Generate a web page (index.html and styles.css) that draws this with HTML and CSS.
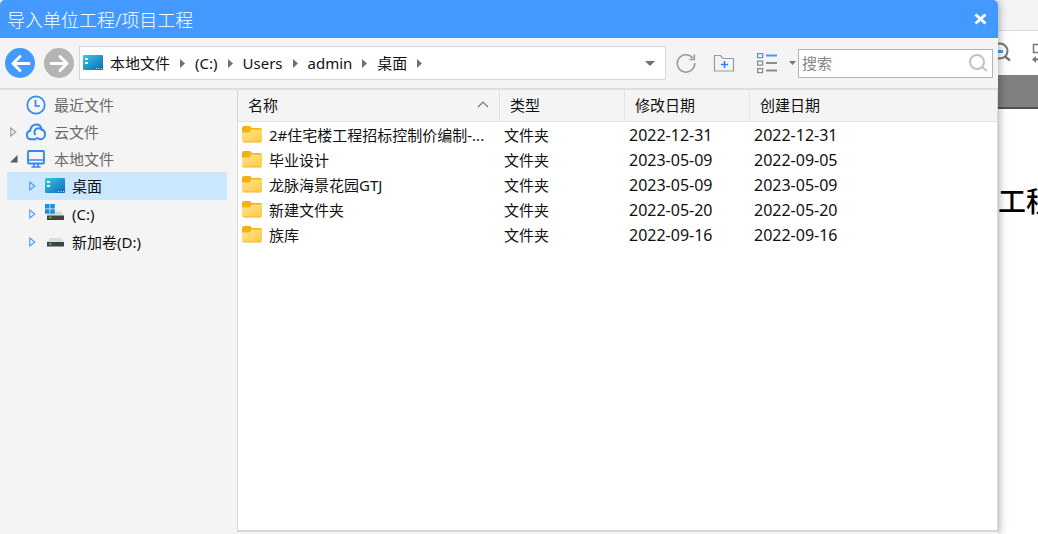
FILE: index.html
```
<!DOCTYPE html>
<html lang="zh-CN">
<head>
<meta charset="utf-8">
<meta name="viewport" content="width=device-width, initial-scale=1">
<title>导入单位工程/项目工程</title>
<link rel="stylesheet" href="styles.css">
</head>
<body>
<svg class="defs" aria-hidden="true">
  <defs>
    <linearGradient id="desk-fill" x1="0" y1="0" x2="1" y2="1"><stop offset="0" stop-color="#35cbe0"/><stop offset="1" stop-color="#0f67b8"/></linearGradient>
    <linearGradient id="folder-fill" x1="0" y1="0" x2="1" y2="1"><stop offset="0" stop-color="#ffe49a"/><stop offset="1" stop-color="#ffc93c"/></linearGradient>
    <symbol id="desk" viewBox="0 0 20 16"><rect width="20" height="15" rx="1" fill="url(#desk-fill)"/><path d="M2 3h3v2H2zM2 7h3v2H2z" fill="#e8ffff"/><path d="M13 13.500h1M15.500 13.500h1M18 13.500h1" stroke="#bfe4ff"/></symbol>
    <symbol id="folder" viewBox="0 0 20 17"><path d="M0 2Q0 0 2 0h6l2 2h8q2 0 2 2v4H0z" fill="#f5b20f"/><path d="M0 6.500h7.500L9.500 3.500H20v11q0 1.500-1.500 1.500h-17Q0 16 0 14.500z" fill="url(#folder-fill)"/><path d="M1 16h18" stroke="#e9b52e"/></symbol>
    <symbol id="twist" viewBox="0 0 7 10"><path d="M.8 1v8l5-4z" fill="none" stroke="currentColor" stroke-width="1.100"/></symbol>
    <symbol id="crumb" viewBox="0 0 5 9"><path d="M0 0v9l5-4.500z" fill="#70707c"/></symbol>
  </defs>
</svg>
<div class="desktop">
  <main class="dialog">
    <header class="titlebar">
      <h1 class="title">导入单位工程/项目工程</h1>
      <button class="close" type="button" aria-label="关闭"><svg width="13" height="12" viewBox="0 0 13 12"><path d="M1.500 1.500l10 9M11.500 1.500l-10 9" stroke="#fff" stroke-width="3"/></svg></button>
    </header>
    <div class="toolbar">
      <button class="nav back" type="button" aria-label="后退"><svg width="30" height="30" viewBox="0 0 30 30"><path d="M24 15.500H8M15 8.500l-7 7 7 7" fill="none" stroke="#fff" stroke-width="3" stroke-linecap="round" stroke-linejoin="round"/></svg></button>
      <button class="nav forward" type="button" aria-label="前进"><svg width="30" height="30" viewBox="0 0 30 30"><path d="M7 15.500h16M16 8.500l7 7-7 7" fill="none" stroke="#fff" stroke-width="3" stroke-linecap="round" stroke-linejoin="round"/></svg></button>
      <nav class="address" aria-label="路径">
        <svg class="desk-icon" width="20" height="16"><use href="#desk"/></svg>
        <a href="#local">本地文件</a><svg class="sep" width="5" height="9"><use href="#crumb"/></svg>
        <a href="#c">(C:)</a><svg class="sep" width="5" height="9"><use href="#crumb"/></svg>
        <a href="#users">Users</a><svg class="sep" width="5" height="9"><use href="#crumb"/></svg>
        <a href="#admin">admin</a><svg class="sep" width="5" height="9"><use href="#crumb"/></svg>
        <a href="#desktop">桌面</a><svg class="sep" width="5" height="9"><use href="#crumb"/></svg>
        <button class="drop" type="button" aria-label="历史路径"><svg width="10" height="5" viewBox="0 0 10 5"><path d="M0 0h10L5 5z" fill="#6a6e80"/></svg></button>
      </nav>
      <button class="tool refresh" type="button" aria-label="刷新"><svg width="22" height="20" viewBox="0 0 22 20"><path d="M17.800 5A8.700 8.700 0 1 0 19.700 10" fill="none" stroke="#999" stroke-width="1.600"/><path d="M19.300 1.500v5h-5" fill="none" stroke="#999" stroke-width="1.600"/></svg></button>
      <button class="tool new-folder" type="button" aria-label="新建文件夹"><svg width="22" height="18" viewBox="0 0 22 18"><path d="M1.500 1.500h6l2.500 3h10.500v12.500h-19z" fill="none" stroke="#9b9b9b" stroke-width="1.200"/><path d="M8 10.500h7M11.500 7v7" stroke="#2484ee" stroke-width="1.500"/></svg></button>
      <button class="tool view" type="button" aria-label="视图"><svg width="20" height="21" viewBox="0 0 20 21"><path d="M.6.600h5v4h-5z" fill="none" stroke="#4598ff" stroke-width="1.300"/><path d="M9 2.500h11" stroke="#4598ff" stroke-width="2"/><path d="M.6 8.100h5v4h-5zM.6 15.600h5v4h-5z" fill="none" stroke="#8c8c8c" stroke-width="1.300"/><path d="M9 10h11M9 17.500h11" stroke="#8c8c8c" stroke-width="2"/></svg><svg width="7" height="4" viewBox="0 0 7 4"><path d="M0 0h7L3.500 4z" fill="#777"/></svg></button>
      <form class="search">
        <input type="search" aria-label="搜索" placeholder="搜索">
        <button type="button" aria-label="开始搜索"><svg width="20" height="18" viewBox="0 0 20 18"><circle cx="9" cy="8" r="7" fill="none" stroke="#c2c2c2" stroke-width="2"/><path d="M14 13l5 4" stroke="#c2c2c2" stroke-width="2"/></svg></button>
      </form>
    </div>
    <div class="content">
      <nav class="tree" aria-label="文件位置">
        <a class="node" href="#recent"><span class="twist"></span><svg class="ico" width="20" height="20" viewBox="0 0 20 20"><circle cx="10" cy="10" r="8.700" fill="none" stroke="#3287ed" stroke-width="1.700"/><path d="M9.500 5v6H14" fill="none" stroke="#3287ed" stroke-width="1.700"/></svg>最近文件</a>
        <a class="node" href="#cloud"><span class="twist"><svg width="7" height="10"><use href="#twist"/></svg></span><svg class="ico" width="20" height="20" viewBox="0 0 20 20"><path d="M10.500 17.300H5a4.300 4.300 0 0 1-.7-8.500C4.300 5 7 2.500 10.300 2.500c2.700 0 4.800 1.600 5.300 5A4.900 4.900 0 0 1 19 12.300c0 3-2 5-4.500 5q-2.500 0-4-2" fill="none" stroke="#3287ed" stroke-width="1.900" stroke-linejoin="round"/><path d="M9.500 13a4 4 0 0 1 6-5.500" fill="none" stroke="#3287ed" stroke-width="1.900"/></svg>云文件</a>
        <a class="node" href="#local"><span class="twist"><svg width="8" height="8" viewBox="0 0 8 8"><path d="M7.500 0v7.500H0z" fill="#555b60"/></svg></span><svg class="ico" width="20" height="20" viewBox="0 0 20 20"><rect x="2" y="2" width="16" height="12.500" rx="1" fill="none" stroke="#3287ed" stroke-width="1.800"/><path d="M2 11h16M8 14v3.500M12 14v3.500M5.500 18h9" fill="none" stroke="#3287ed" stroke-width="1.600"/></svg>本地文件</a>
        <a class="node child selected" href="#desktop"><span class="twist"><svg width="7" height="10"><use href="#twist"/></svg></span><svg class="ico" width="20" height="16"><use href="#desk"/></svg>桌面</a>
        <a class="node child" href="#c"><span class="twist"><svg width="7" height="10"><use href="#twist"/></svg></span><svg class="ico" width="20" height="20" viewBox="0 0 20 20"><path d="M5 7.500h11l3 4H2z" fill="#d6d9da"/><path d="M2 11.500h17V16H2z" fill="#414343"/><path d="M4 13.500h2.500" stroke="#45d24b" stroke-width="1.500"/><path d="M0 0h4.500v4.500H0zM5.300 0h4.500v4.500H5.300zM0 5.300h4.500v4.500H0zM5.300 5.300h4.500v4.500H5.300z" fill="#1692e0"/></svg>(C:)</a>
        <a class="node child" href="#d"><span class="twist"><svg width="7" height="10"><use href="#twist"/></svg></span><svg class="ico" width="20" height="20" viewBox="0 0 20 20"><path d="M5 6h11l3 4H2z" fill="#dadddd"/><path d="M2 10h17v4.500H2z" fill="#414343"/><path d="M4 12h2.500" stroke="#45d24b" stroke-width="1.500"/></svg>新加卷(D:)</a>
      </nav>
      <section class="files" aria-label="文件列表">
        <table class="list">
          <colgroup><col class="c-name"><col class="c-type"><col class="c-date"><col></colgroup>
          <thead><tr>
            <th><span class="sorted">名称<svg width="12" height="7" viewBox="0 0 12 7"><path d="M1 6l5-5 5 5" fill="none" stroke="#777" stroke-width="1.200"/></svg></span></th>
            <th>类型</th><th>修改日期</th><th>创建日期</th></tr></thead>
          <tbody>
            <tr><td><span class="name"><svg width="20" height="17"><use href="#folder"/></svg>2#住宅楼工程招标控制价编制-...</span></td><td>文件夹</td><td class="date">2022-12-31</td><td class="date">2022-12-31</td></tr>
            <tr><td><span class="name"><svg width="20" height="17"><use href="#folder"/></svg>毕业设计</span></td><td>文件夹</td><td class="date">2023-05-09</td><td class="date">2022-09-05</td></tr>
            <tr><td><span class="name"><svg width="20" height="17"><use href="#folder"/></svg>龙脉海景花园GTJ</span></td><td>文件夹</td><td class="date">2023-05-09</td><td class="date">2023-05-09</td></tr>
            <tr><td><span class="name"><svg width="20" height="17"><use href="#folder"/></svg>新建文件夹</span></td><td>文件夹</td><td class="date">2022-05-20</td><td class="date">2022-05-20</td></tr>
            <tr><td><span class="name"><svg width="20" height="17"><use href="#folder"/></svg>族库</span></td><td>文件夹</td><td class="date">2022-09-16</td><td class="date">2022-09-16</td></tr>
          </tbody>
        </table>
      </section>
    </div>
  </main>
  <aside class="behind">
    <div class="ribbon"></div>
    <div class="tools">
      <svg width="40" height="44" viewBox="0 0 40 44"><circle cx="2" cy="20" r="7.500" fill="none" stroke="#777" stroke-width="2"/><path d="M7 25.500l5 4" stroke="#777" stroke-width="2.500"/><path d="M-2 20.500h7" stroke="#4a9df8" stroke-width="3"/><path d="M42 13.500h-6.500v8H42" fill="none" stroke="#777" stroke-width="1.500"/><path d="M42 28.500h-6" stroke="#777" stroke-width="2"/><path d="M34 28.500l4-3.500v7z" fill="#777"/></svg>
    </div>
    <div class="band"></div>
    <p class="doc">工程</p>
  </aside>
</div>
</body>
</html>
```
FILE: styles.css
```
* { box-sizing: border-box; }
body {
  margin: 0;
  background: #fff;
  color: #111;
  font: 15px/20px "Noto Sans", "Noto Sans CJK SC", sans-serif;
}
a { color: inherit; text-decoration: none; }
button { padding: 0; border: 0; background: none; font: inherit; }
svg { display: block; flex: none; }
.defs { position: absolute; width: 0; height: 0; }

.desktop { display: flex; min-height: 100vh; overflow: hidden; background: #fff; }
.dialog {
  position: relative;
  z-index: 1;
  display: flex;
  flex: 1;
  flex-direction: column;
  min-width: 0;
  border-radius: 5px 5px 0 0;
  background: #f4f4f4;
  box-shadow: 1px 0 9px rgba(0, 0, 0, .35);
}
.titlebar {
  display: flex;
  align-items: center;
  justify-content: space-between;
  height: 38px;
  padding: 2px 11px 0 7px;
  border-radius: 5px 5px 0 0;
  background: #4499ff;
  color: #fff;
}
.close { margin-bottom: 2px; }
.title { margin: 0; font-size: 18px; font-weight: 300; line-height: 24px; }

.toolbar { display: flex; align-items: center; height: 50px; padding: 0 5px; }
.nav { border-radius: 50%; }
.back { background: #4499ff; }
.forward { margin-left: 9px; background: #b4b4b4; }
.address {
  display: flex;
  flex: 1;
  align-items: center;
  height: 34px;
  margin-left: 5px;
  padding: 0 10px 0 3px;
  border: 1px solid #d8d8dc;
  background: #fff;
}
.desk-icon { margin-right: 7px; }
.sep { margin: 0 10px; }
.drop { margin-left: auto; }
.tool { display: flex; align-items: center; }
.refresh { margin-left: 9px; }
.new-folder { margin-left: 16px; }
.view { gap: 12px; margin-left: 22px; }
.search {
  display: flex;
  align-items: center;
  width: 195px;
  height: 29px;
  margin-left: 2px;
  padding: 0 4px 0 3px;
  border: 1px solid #b4b4b4;
  background: #fff;
}
.search input {
  flex: 1;
  min-width: 0;
  padding: 0;
  border: 0;
  outline: 0;
  background: none;
  font: inherit;
}
.search input::placeholder { color: #858585; opacity: 1; }

.content { display: flex; flex: 1; border-top: 2px solid #dedede; }
.tree { width: 237px; padding: 1px 10px 0 7px; }
.node { display: flex; align-items: center; height: 27px; color: #6a6a6a; }
.twist { display: flex; justify-content: center; width: 13px; margin-right: 6px; color: #999; }
.child { height: 28px; padding-left: 19px; color: #111; }
.child .twist { color: #4499ff; }
.ico { margin-right: 8px; }
.child .ico { margin-right: 7px; }
.selected { background: #cce8ff; }

.files {
  flex: 1;
  min-width: 0;
  margin-bottom: 2px;
  border: solid #d8d8d8;
  border-width: 0 1px 2px;
  background: #fff;
}
.list { width: 100%; table-layout: fixed; border-collapse: separate; border-spacing: 0; }
.c-name { width: 262px; }
.c-type, .c-date { width: 125px; }
.list th {
  height: 32px;
  padding: 0 10px 2px;
  border-right: 1px solid #e2e2e2;
  border-bottom: 1px solid #e2e2e2;
  background: #f4f4f4;
  font-weight: 400;
  text-align: left;
}
.list th:last-child { border-right: 0; }
.list td { height: 25px; padding: 0 4px; white-space: nowrap; }
.sorted { display: flex; align-items: center; justify-content: space-between; }
.name { display: flex; align-items: center; gap: 7px; }
.list .date { font-size: 16px; }

.behind { width: 40px; overflow: hidden; }
.ribbon { height: 31px; border-bottom: 1px solid #dcdcdc; background: #f4f4f4; }
.tools { height: 44px; }
.band { height: 34px; border-bottom: 2px solid #505050; background: #808080; }
.doc {
  margin: 76px 0 0;
  color: #000;
  font: 500 28px/36px "Liberation Serif", "Noto Sans CJK SC", serif;
  white-space: nowrap;
}
```
